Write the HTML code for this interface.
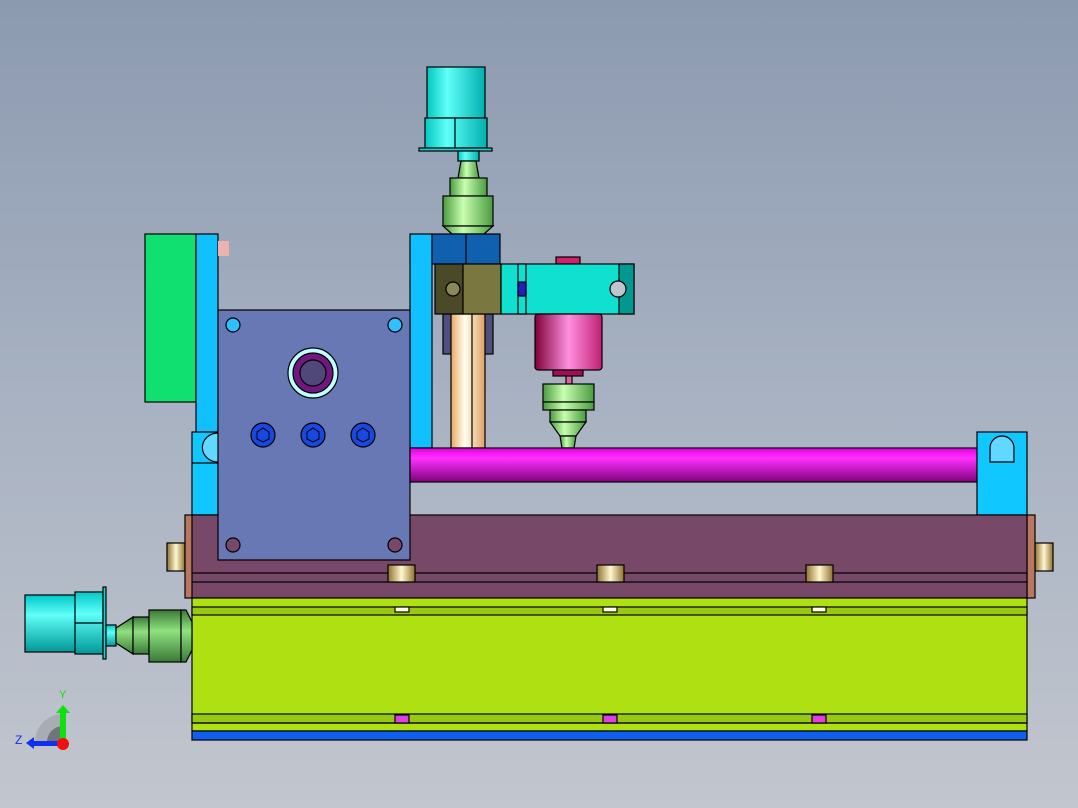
<!DOCTYPE html>
<html><head><meta charset="utf-8"><style>
html,body{margin:0;padding:0;width:1078px;height:808px;overflow:hidden}
body{background:linear-gradient(#8c9ab0,#a8b2c2 50%,#c2c6ce)}
svg{position:absolute;left:0;top:0}
</style></head><body>
<svg width="1078" height="808" viewBox="0 0 1078 808" stroke="#000" stroke-width="1.2">
<defs>
<linearGradient id="cy" x1="0" x2="1"><stop offset="0" stop-color="#00c8c0"/><stop offset=".35" stop-color="#60fff8"/><stop offset="1" stop-color="#00b0b0"/></linearGradient>
<linearGradient id="cyv" x1="0" y1="0" x2="0" y2="1"><stop offset="0" stop-color="#00c8c8"/><stop offset=".35" stop-color="#60fff8"/><stop offset="1" stop-color="#009898"/></linearGradient>
<linearGradient id="gr" x1="0" x2="1"><stop offset="0" stop-color="#4a9a40"/><stop offset=".4" stop-color="#c8ffb0"/><stop offset="1" stop-color="#4a9a40"/></linearGradient>
<linearGradient id="grv" x1="0" y1="0" x2="0" y2="1"><stop offset="0" stop-color="#3a7a38"/><stop offset=".4" stop-color="#90e080"/><stop offset="1" stop-color="#3a7a38"/></linearGradient>
<linearGradient id="mg" x1="0" y1="0" x2="0" y2="1"><stop offset="0" stop-color="#e000e0"/><stop offset=".3" stop-color="#ff30ff"/><stop offset="1" stop-color="#800080"/></linearGradient>
<linearGradient id="pk" x1="0" x2="1"><stop offset="0" stop-color="#800038"/><stop offset=".5" stop-color="#ff90e0"/><stop offset="1" stop-color="#c02070"/></linearGradient>
<linearGradient id="tan" x1="0" x2="1"><stop offset="0" stop-color="#e8a860"/><stop offset=".4" stop-color="#fffff0"/><stop offset="1" stop-color="#e0a060"/></linearGradient>
<linearGradient id="bz" x1="0" x2="1"><stop offset="0" stop-color="#907030"/><stop offset=".5" stop-color="#fff8d0"/><stop offset="1" stop-color="#907030"/></linearGradient>
</defs>
<rect x="427" y="67" width="58" height="51" fill="url(#cy)"/>
<rect x="425" y="118" width="62" height="30" fill="url(#cy)"/>
<line x1="455" y1="118" x2="455" y2="148"/>
<rect x="419" y="148" width="73" height="3" fill="#20d0d0"/>
<rect x="458" y="151" width="21" height="10" fill="url(#cy)"/>
<polygon points="461,161 476,161 479,178 458,178" fill="url(#gr)"/>
<rect x="450" y="178" width="37" height="18" fill="url(#gr)"/>
<rect x="443" y="196" width="50" height="30" fill="url(#gr)"/>
<polygon points="443,226 493,226 484,234 452,234" fill="url(#gr)"/>
<rect x="145" y="234" width="51" height="168" fill="#10e070"/>
<rect x="196" y="234" width="22" height="198" fill="#10c0ff"/>
<rect x="192" y="432" width="26" height="83" fill="#10c8ff"/>
<line x1="192" y1="463" x2="218" y2="463"/>
<path d="M218,433 A14,13 0 0 0 218,462" fill="#60d8ff"/>
<rect x="218" y="241" width="11" height="15" fill="#f0b0b0" stroke="none"/>
<rect x="410" y="234" width="22" height="214" fill="#10c0ff"/>
<rect x="432" y="234" width="68" height="30" fill="#1060b0"/>
<line x1="466" y1="234" x2="466" y2="264"/>
<rect x="443" y="314" width="50" height="40" fill="#505080"/>
<rect x="451" y="314" width="34" height="134" fill="url(#tan)"/>
<line x1="472" y1="314" x2="472" y2="448"/>
<rect x="435" y="264" width="28" height="50" fill="#4a4a28"/>
<rect x="463" y="264" width="38" height="50" fill="#7a7840"/>
<circle cx="453" cy="289" r="7" fill="#888858"/>
<rect x="556" y="257" width="24" height="7" fill="#d02070"/>
<rect x="501" y="264" width="133" height="50" fill="#10e0d0"/>
<rect x="518" y="264" width="8" height="50" fill="#10e0d0"/>
<rect x="518" y="282" width="8" height="14" fill="#2020c0"/>
<rect x="619" y="264" width="15" height="50" fill="#009890"/>
<circle cx="618" cy="289" r="8" fill="#c0c4cc"/>
<rect x="535" y="314" width="67" height="56" rx="3" fill="url(#pk)"/>
<rect x="553" y="370" width="30" height="6" fill="#a01050"/>
<rect x="566" y="376" width="6" height="8" fill="#e060a0"/>
<rect x="543" y="384" width="51" height="18" fill="url(#gr)"/>
<rect x="543" y="402" width="51" height="8" fill="url(#gr)"/>
<rect x="550" y="410" width="36" height="12" fill="url(#gr)"/>
<polygon points="550,422 586,422 576,436 560,436" fill="url(#gr)"/>
<polygon points="560,436 576,436 574,448 562,448" fill="url(#gr)"/>
<rect x="218" y="310" width="192" height="250" fill="#6878b4"/>
<circle cx="233" cy="325" r="7" fill="#30c0ff"/>
<circle cx="395" cy="325" r="7" fill="#30c0ff"/>
<circle cx="313" cy="373" r="25" fill="#c0ffff"/>
<circle cx="313" cy="373" r="20" fill="#701880"/>
<circle cx="313" cy="373" r="13" fill="#504878"/>
<g fill="#1848e0"><circle cx="263" cy="435" r="12"/><circle cx="313" cy="435" r="12"/><circle cx="363" cy="435" r="12"/></g>
<g fill="none" stroke-width="1"><polygon points="263,428 269,432 269,439 263,442 257,439 257,432"/><polygon points="313,428 319,432 319,439 313,442 307,439 307,432"/><polygon points="363,428 369,432 369,439 363,442 357,439 357,432"/></g>
<rect x="410" y="448" width="580" height="34" fill="url(#mg)"/>
<rect x="977" y="432" width="50" height="83" fill="#10c8ff"/>
<path d="M990,448 A12,12 0 0 1 1014,448 L1014,462 L990,462Z" fill="#60d8ff"/>
<rect x="167" y="543" width="18" height="28" fill="url(#bz)"/>
<rect x="1035" y="543" width="18" height="28" fill="url(#bz)"/>
<rect x="185" y="515" width="8" height="83" fill="#b87860"/>
<rect x="1027" y="515" width="8" height="83" fill="#b87860"/>
<rect x="192" y="515" width="835" height="83" fill="#784868"/>
<rect x="218" y="514" width="192" height="46" fill="#6878b4" stroke="none"/>
<path d="M218,514 V560 H410 V514" fill="none"/>
<circle cx="233" cy="545" r="7" fill="#784868"/>
<circle cx="395" cy="545" r="7" fill="#784868"/>
<line x1="192" y1="573" x2="1027" y2="573"/>
<line x1="192" y1="582" x2="1027" y2="582"/>
<rect x="388" y="565" width="27" height="17" fill="url(#bz)"/>
<rect x="597" y="565" width="27" height="17" fill="url(#bz)"/>
<rect x="806" y="565" width="27" height="17" fill="url(#bz)"/>
<rect x="192" y="598" width="835" height="133" fill="#aee012"/>
<rect x="192" y="607" width="835" height="8" fill="#98c810"/>
<rect x="192" y="714" width="835" height="9" fill="#98c810"/>
<line x1="192" y1="723" x2="1027" y2="723"/>
<g fill="#ffffe0"><rect x="395" y="607" width="14" height="5"/><rect x="603" y="607" width="14" height="5"/><rect x="812" y="607" width="14" height="5"/></g>
<g fill="#e040e0"><rect x="395" y="715" width="14" height="8"/><rect x="603" y="715" width="14" height="8"/><rect x="812" y="715" width="14" height="8"/></g>
<rect x="192" y="731" width="835" height="9" fill="#1060f0"/>
<rect x="25" y="595" width="52" height="57" fill="url(#cyv)"/>
<rect x="75" y="592" width="28" height="62" fill="url(#cyv)"/>
<line x1="75" y1="623" x2="103" y2="623"/>
<rect x="103" y="587" width="3" height="72" fill="#20d0d0"/>
<rect x="106" y="625" width="10" height="21" fill="url(#cyv)"/>
<polygon points="116,628 133,617 133,654 116,643" fill="url(#grv)"/>
<rect x="133" y="617" width="16" height="37" fill="url(#grv)"/>
<rect x="149" y="610" width="32" height="52" fill="url(#grv)"/>
<polygon points="181,610 186,610 192,622 192,650 186,662 181,662" fill="url(#grv)"/>
<path d="M35,742 A28,28 0 0 1 63,714 L63,742Z" fill="#a8acb4" stroke="none"/>
<path d="M47,742 A16,16 0 0 1 63,726 L63,742Z" fill="#70747c" stroke="none"/>
<rect x="60" y="712" width="6" height="30" fill="#10e010" stroke="none"/>
<polygon points="56,713 63,705 70,713" fill="#10e010" stroke="none"/>
<rect x="34" y="741" width="28" height="5" fill="#1030f0" stroke="none"/>
<polygon points="34,737 26,743 34,749" fill="#1030f0" stroke="none"/>
<circle cx="63" cy="744" r="6" fill="#f01010" stroke="none"/>
<text x="59" y="698" font-family="Liberation Sans, sans-serif" font-size="11" fill="#10e010" stroke="none">Y</text>
<text x="15" y="744" font-family="Liberation Sans, sans-serif" font-size="12" fill="#1030f0" stroke="none">Z</text>
</svg>
</body></html>
